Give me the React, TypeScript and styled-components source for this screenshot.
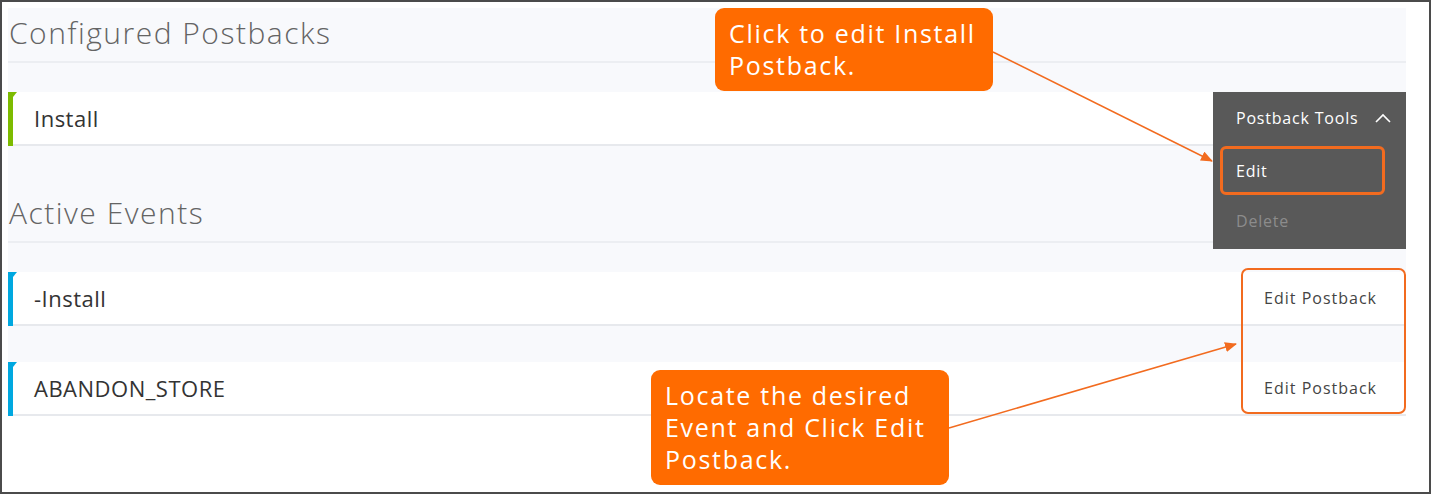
import React from 'react';
import styled, { createGlobalStyle } from 'styled-components';

const ORANGE = '#ff6b00';
const OUTLINE = '#f26b1f';

const GlobalStyle = createGlobalStyle`
  html, body { margin: 0; padding: 0; background: #fff; }
  body { font-family: 'Open Sans', 'Liberation Sans', sans-serif; }
`;

const Frame = styled.div`
  position: relative;
  width: 1431px;
  height: 494px;
  box-sizing: border-box;
  padding: 8px 25px 0 8px;
  background: #fff;
  box-shadow: inset 0 0 0 2px #4b4b4b;
  overflow: hidden;
`;

const Panel = styled.div`
  display: flex;
  flex-direction: column;
  background: #f8f9fc;
`;

const Section = styled.section<{ $top: number }>`
  display: flex;
  flex-direction: column;
  margin-top: ${(p) => p.$top}px;
`;

const Heading = styled.h2`
  margin: 0;
  height: 55px;
  box-sizing: border-box;
  padding: 5px 0 0 1px;
  font-size: 30px;
  font-weight: 300;
  letter-spacing: 1.5px;
  line-height: 40px;
  color: #646464;
  border-bottom: 2px solid #eceef2;
`;

const RowList = styled.div`
  display: flex;
  flex-direction: column;
  gap: 36px;
  margin-top: 29px;
`;

const Row = styled.div<{ $accent: string }>`
  position: relative;
  display: flex;
  align-items: center;
  justify-content: space-between;
  height: 52px;
  padding: 0 29px 0 26px;
  background: #fff;
  border-bottom: 2px solid #e7e9ed;
  font-size: 22px;
  letter-spacing: 0.5px;
  color: #333;

  &::before {
    content: '';
    position: absolute;
    left: 0;
    top: 0;
    bottom: -2px;
    width: 5px;
    background: ${(p) => p.$accent};
  }
  &::after {
    content: '';
    position: absolute;
    left: 5px;
    top: 0;
    border-top: 5px solid ${(p) => p.$accent};
    border-right: 4px solid transparent;
  }
`;

const RowAction = styled.span`
  font-size: 16px;
  letter-spacing: 1px;
  color: #444;
`;

const Menu = styled.div`
  position: absolute;
  left: 1213px;
  top: 92px;
  width: 193px;
  background: #595959;
  display: flex;
  flex-direction: column;
  padding-bottom: 2px;
`;

const MenuHeader = styled.div`
  display: flex;
  align-items: center;
  justify-content: space-between;
  height: 52px;
  padding: 0 15px 0 23px;
  color: #fff;
  font-size: 16px;
  letter-spacing: 0.8px;
`;

const MenuItem = styled.div<{ $disabled?: boolean; $focused?: boolean }>`
  display: flex;
  align-items: center;
  box-sizing: border-box;
  height: ${(p) => (p.$focused ? 49 : 52)}px;
  margin: ${(p) => (p.$focused ? '2px 21px 0 7px' : '0')};
  padding-left: ${(p) => (p.$focused ? 13 : 23)}px;
  border: ${(p) => (p.$focused ? `3px solid ${OUTLINE}` : 'none')};
  border-radius: 6px;
  font-size: 16px;
  letter-spacing: 0.8px;
  color: ${(p) => (p.$disabled ? '#8c8c8c' : '#fff')};
`;

const Highlight = styled.div`
  position: absolute;
  left: 1241px;
  top: 268px;
  width: 165px;
  height: 146px;
  box-sizing: border-box;
  border: 2px solid ${OUTLINE};
  border-radius: 7px;
`;

const Callout = styled.div<{ $x: number; $y: number; $w: number }>`
  position: absolute;
  left: ${(p) => p.$x}px;
  top: ${(p) => p.$y}px;
  width: ${(p) => p.$w}px;
  box-sizing: border-box;
  padding: 9px 10px 10px 14px;
  background: ${ORANGE};
  border-radius: 9px;
  color: #fff;
  font-size: 25px;
  letter-spacing: 1.7px;
  line-height: 32px;
  white-space: nowrap;
`;

const Arrows = styled.svg`
  position: absolute;
  left: 0;
  top: 0;
  pointer-events: none;
`;

const ChevronUp = () => (
  <svg width="16" height="10" viewBox="0 0 16 10" fill="none">
    <path d="M1 9 L8 2 L15 9" stroke="#fff" strokeWidth="1.6" />
  </svg>
);

export default function App() {
  return (
    <>
      <GlobalStyle />
      <Frame>
        <Panel>
          <Section $top={0}>
            <Heading>Configured Postbacks</Heading>
            <RowList>
              <Row $accent="#7dbb00">Install</Row>
            </RowList>
          </Section>
          <Section $top={42}>
            <Heading>Active Events</Heading>
            <RowList>
              <Row $accent="#00a8e0">
                -Install
                <RowAction>Edit Postback</RowAction>
              </Row>
              <Row $accent="#00a8e0">
                ABANDON_STORE
                <RowAction>Edit Postback</RowAction>
              </Row>
            </RowList>
          </Section>
        </Panel>

        <Menu>
          <MenuHeader>
            Postback Tools
            <ChevronUp />
          </MenuHeader>
          <MenuItem $focused>Edit</MenuItem>
          <MenuItem $disabled>Delete</MenuItem>
        </Menu>

        <Highlight />

        <Callout $x={715} $y={8} $w={278}>
          Click to edit Install
          <br />
          Postback.
        </Callout>
        <Callout $x={651} $y={370} $w={298}>
          Locate the desired
          <br />
          Event and Click Edit
          <br />
          Postback.
        </Callout>

        <Arrows width="1431" height="494">
          <defs>
            <marker id="head" markerWidth="12" markerHeight="10" refX="11" refY="5" orient="auto" markerUnits="userSpaceOnUse">
              <path d="M0 0 L12 5 L0 10 Z" fill={OUTLINE} />
            </marker>
          </defs>
          <line x1="993" y1="52" x2="1212" y2="161" stroke={OUTLINE} strokeWidth="1.5" markerEnd="url(#head)" />
          <line x1="949" y1="428" x2="1236" y2="344" stroke={OUTLINE} strokeWidth="1.5" markerEnd="url(#head)" />
        </Arrows>
      </Frame>
    </>
  );
}
